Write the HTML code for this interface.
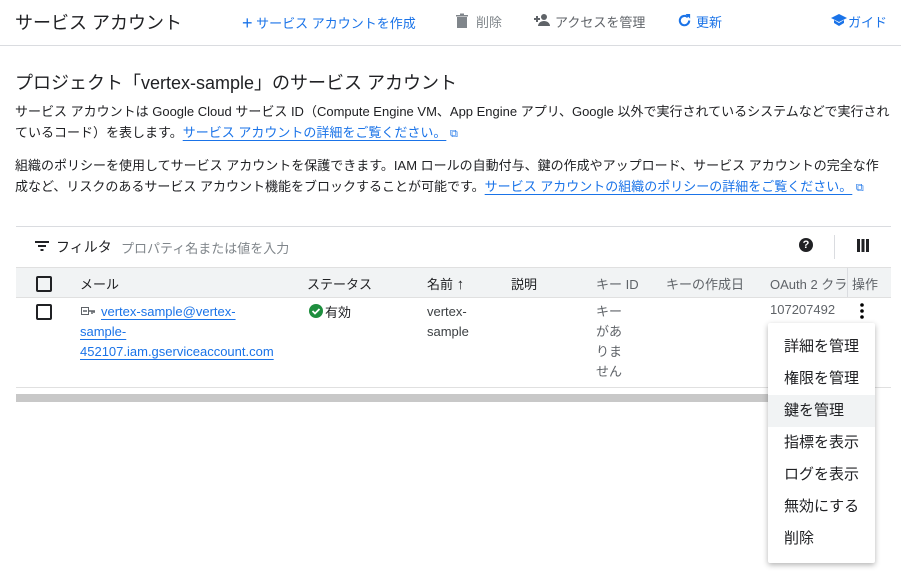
<!DOCTYPE html><html><head><meta charset="utf-8"><style>
body{margin:0;width:901px;height:571px;overflow:hidden;background:#fff;font-family:"Liberation Sans","Noto Sans CJK JP",sans-serif;color:#202124;position:relative}
.a{position:absolute;white-space:nowrap}
.lk{color:#1a73e8;text-decoration:underline;text-underline-offset:3px}
.cb{position:absolute;width:12px;height:12px;border:2px solid #202124;border-radius:2px}
.mi{position:absolute;left:0;width:107px;height:32px;line-height:32px;padding-left:16px;box-sizing:border-box;font-size:15px}
</style></head><body>
<div class="a" style="left:15px;top:9px;font-size:18px">サービス アカウント</div>
<div class="a" style="left:242px;top:12px;font-size:13px;color:#1a73e8"><span style="font-size:18px;position:relative;top:1px">+</span> サービス アカウントを作成</div>
<svg class="a" style="left:455px;top:13px" width="14" height="16" viewBox="0 0 14 16"><path d="M2 4h10v11H2zM1 2h12v1.5H1zM5 0.5h4v2H5z" fill="#80868b"/></svg>
<div class="a" style="left:476px;top:12px;font-size:13px;color:#80868b">削除</div>
<svg class="a" style="left:533px;top:13px" width="18" height="14" viewBox="0 0 18 14"><circle cx="11" cy="4" r="3" fill="#5f6368"/><path d="M5 13c0-3 3-5 6-5s6 2 6 5z" fill="#5f6368"/><path d="M1 6h6M4 3v6" stroke="#5f6368" stroke-width="2"/></svg>
<div class="a" style="left:555px;top:12px;font-size:13px;color:#5f6368">アクセスを管理</div>
<svg class="a" style="left:677px;top:13px" width="15" height="15" viewBox="0 0 16 16"><path d="M13 8a5 5 0 1 1-1.5-3.5" fill="none" stroke="#1a73e8" stroke-width="2.2"/><path d="M9 1h5v5z" fill="#1a73e8"/></svg>
<div class="a" style="left:696px;top:12px;font-size:13px;color:#1a73e8">更新</div>
<svg class="a" style="left:831px;top:13px" width="16" height="14" viewBox="0 0 16 14"><path d="M8 1L0 5l8 4 8-4zM3 7v3l5 3 5-3V7L8 10z" fill="#1a73e8"/></svg>
<div class="a" style="left:848px;top:12px;font-size:13px;color:#1a73e8">ガイド</div>
<div class="a" style="left:0;top:45px;width:901px;height:1px;background:#dadce0"></div>
<div class="a" style="left:15px;top:69px;font-size:18px">プロジェクト「vertex-sample」のサービス アカウント</div>
<div class="a" style="left:15px;top:101px;font-size:13px;line-height:21px">サービス アカウントは Google Cloud サービス ID（Compute Engine VM、App Engine アプリ、Google 以外で実行されているシステムなどで実行され<br>ているコード）を表します。<span class="lk">サービス アカウントの詳細をご覧ください。</span> <span style="color:#1a73e8;font-size:11px">⧉</span></div>
<div class="a" style="left:15px;top:155px;font-size:13px;line-height:21px">組織のポリシーを使用してサービス アカウントを保護できます。IAM ロールの自動付与、鍵の作成やアップロード、サービス アカウントの完全な作<br>成など、リスクのあるサービス アカウント機能をブロックすることが可能です。<span class="lk">サービス アカウントの組織のポリシーの詳細をご覧ください。</span> <span style="color:#1a73e8;font-size:11px">⧉</span></div>
<div class="a" style="left:16px;top:226px;width:875px;height:1px;background:#dadce0"></div>
<svg class="a" style="left:35px;top:240px" width="14" height="12" viewBox="0 0 14 12"><path d="M0 2h14M3 6h8M5.5 10h3" stroke="#202124" stroke-width="2"/></svg>
<div class="a" style="left:56px;top:237px;font-size:14px">フィルタ</div>
<div class="a" style="left:121px;top:238px;font-size:13px;color:#80868b">プロパティ名または値を入力</div>
<div class="a" style="left:799px;top:238px;width:14px;height:14px;border-radius:50%;background:#202124;color:#fff;font-size:11px;font-weight:bold;text-align:center;line-height:14px">?</div>
<div class="a" style="left:834px;top:235px;width:1px;height:24px;background:#dadce0"></div>
<svg class="a" style="left:857px;top:239px" width="12" height="13"><path d="M0 0h3v13H0zM4.5 0h3v13h-3zM9 0h3v13H9z" fill="#202124"/></svg>
<div class="a" style="left:16px;top:267px;width:875px;height:29px;background:#f1f3f4;border-top:1px solid #e0e0e0;border-bottom:1px solid #e0e0e0"></div>
<div class="a" style="left:847px;top:268px;width:1px;height:29px;background:#dadce0"></div>
<div class="cb" style="left:36px;top:276px"></div>
<div class="a" style="top:274px;left:80px;font-size:13px">メール</div>
<div class="a" style="top:274px;left:307px;font-size:13px">ステータス</div>
<div class="a" style="top:274px;left:427px;font-size:13px">名前 <b style="font-size:15px">↑</b></div>
<div class="a" style="top:274px;left:511px;font-size:13px">説明</div>
<div class="a" style="top:274px;left:596px;font-size:13px;color:#5f6368">キー ID</div>
<div class="a" style="top:274px;left:666px;font-size:13px;color:#5f6368">キーの作成日</div>
<div class="a" style="top:274px;left:770px;font-size:13px;color:#5f6368;width:76px;overflow:hidden">OAuth 2 クライアント</div>
<div class="a" style="top:274px;left:852px;font-size:13px;color:#5f6368">操作</div>
<div class="cb" style="left:36px;top:304px"></div>
<svg class="a" style="left:81px;top:306px" width="14" height="11"><rect x="0.5" y="1.5" width="7" height="7" fill="none" stroke="#5f6368"/><path d="M2 5h4M8 5h6M11 5v3M13 5v2" stroke="#5f6368" stroke-width="1.5"/></svg>
<div class="a" style="left:80px;top:302px;font-size:13px;line-height:20px"><span style="margin-left:21px" class="lk">vertex-sample@vertex-</span><br><span class="lk">sample-</span><br><span class="lk">452107.iam.gserviceaccount.com</span></div>
<svg class="a" style="left:309px;top:304px" width="14" height="14"><circle cx="7" cy="7" r="7" fill="#1e8e3e"/><path d="M3.5 7l2.5 2.5 4.5-4.5" stroke="#fff" stroke-width="1.8" fill="none"/></svg>
<div class="a" style="left:325px;top:302px;font-size:13px">有効</div>
<div class="a" style="left:427px;top:302px;font-size:13px;line-height:20px;color:#3c4043">vertex-<br>sample</div>
<div class="a" style="left:596px;top:302px;font-size:13px;line-height:20px;color:#5f6368">キー<br>があ<br>りま<br>せん</div>
<div class="a" style="left:770px;top:302px;font-size:13px;color:#5f6368">107207492</div>
<svg class="a" style="left:860px;top:303px" width="4" height="16"><circle cx="2" cy="2" r="1.8"/><circle cx="2" cy="8" r="1.8"/><circle cx="2" cy="14" r="1.8"/></svg>
<div class="a" style="left:16px;top:387px;width:875px;height:1px;background:#e0e0e0"></div>
<div class="a" style="left:16px;top:394px;width:760px;height:8px;background:#c8c8c8"></div>
<div class="a" style="left:768px;top:323px;width:107px;height:240px;background:#fff;box-shadow:0 2px 6px rgba(0,0,0,.3);border-radius:2px">
<div class="mi" style="top:8px">詳細を管理</div>
<div class="mi" style="top:40px">権限を管理</div>
<div class="mi" style="top:72px;background:#f1f3f4">鍵を管理</div>
<div class="mi" style="top:104px">指標を表示</div>
<div class="mi" style="top:136px">ログを表示</div>
<div class="mi" style="top:168px">無効にする</div>
<div class="mi" style="top:200px">削除</div>
</div>
</body></html>
